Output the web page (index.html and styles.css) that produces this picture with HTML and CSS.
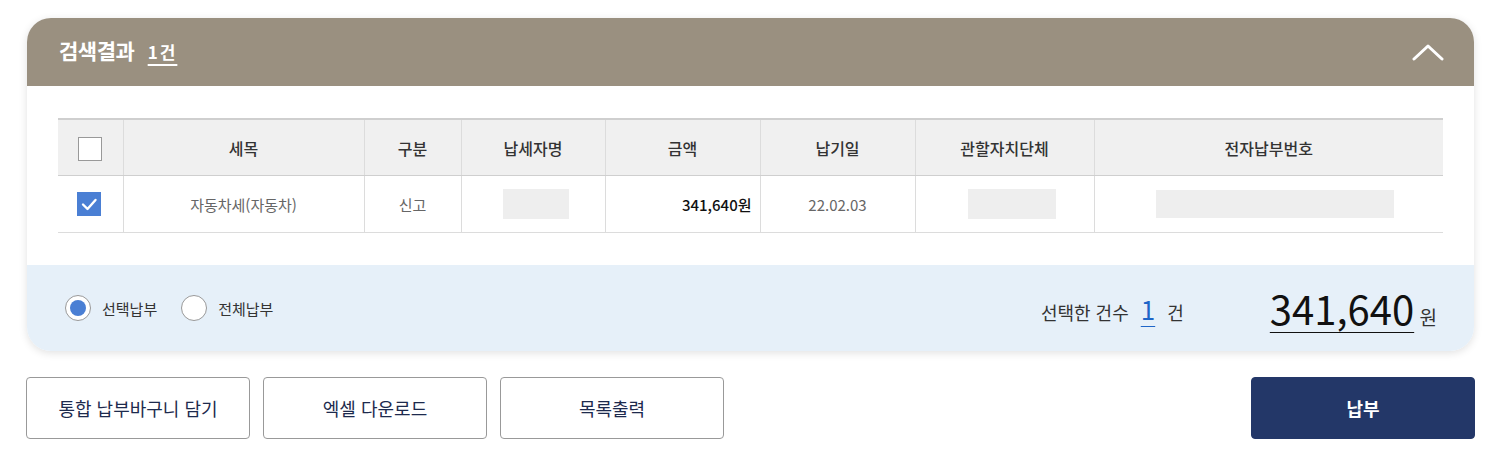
FILE: index.html
```html
<!DOCTYPE html>
<html lang="ko">

<head>
  <meta charset="UTF-8">
  <title>검색결과</title>
  <link rel="stylesheet" href="styles.css">
</head>

<body>

  <div class="page">
    <section class="result-card">
      <div class="result-head">
        <h2>검색결과 <span class="count">1건</span></h2>
        <button class="toggle" aria-label="접기">
          <svg width="32" height="18" viewBox="0 0 32 18">
            <polyline points="2,16 16,3 30,16" fill="none" stroke="#fff" stroke-width="3" stroke-linecap="round" stroke-linejoin="round" />
          </svg>
        </button>
      </div>

      <div class="result-body">
        <table class="tax-table">
          <colgroup>
            <col style="width:65px">
            <col style="width:241px">
            <col style="width:97px">
            <col style="width:144px">
            <col style="width:155px">
            <col style="width:155px">
            <col style="width:179px">
            <col>
          </colgroup>
          <thead>
            <tr>
              <th><span class="check"></span></th>
              <th>세목</th>
              <th>구분</th>
              <th>납세자명</th>
              <th>금액</th>
              <th>납기일</th>
              <th>관할자치단체</th>
              <th>전자납부번호</th>
            </tr>
          </thead>
          <tbody>
            <tr>
              <td>
                <span class="check checked">
                  <svg width="24" height="24" viewBox="0 0 24 24">
                    <polyline points="6,12.5 10.5,17 18.5,8" fill="none" stroke="#fff" stroke-width="2.4" stroke-linecap="round" stroke-linejoin="round" />
                  </svg>
                </span>
              </td>
              <td>자동차세(자동차)</td>
              <td>신고</td>
              <td><span class="mask mask-name"></span></td>
              <td class="amount">341,640원</td>
              <td>22.02.03</td>
              <td><span class="mask mask-org"></span></td>
              <td><span class="mask mask-num"></span></td>
            </tr>
          </tbody>
        </table>
      </div>

      <div class="result-foot">
        <div class="pay-type">
          <label class="radio"><span class="dot on"></span>선택납부</label>
          <label class="radio"><span class="dot"></span>전체납부</label>
        </div>
        <div class="summary">
          <span class="sel-count">선택한 건수 <em>1</em> 건</span>
          <span class="total"><strong>341,640</strong> 원</span>
        </div>
      </div>
    </section>

    <div class="actions">
      <button class="btn">통합 납부바구니 담기</button>
      <button class="btn">엑셀 다운로드</button>
      <button class="btn">목록출력</button>
      <button class="btn btn-pay">납부</button>
    </div>
  </div>

</body>

</html>
```

FILE: styles.css
```css
body {
  margin: 0;
  background: #fff;
  font-family: "Noto Sans CJK KR", "Noto Sans", sans-serif;
  color: #333;
}

.page {
  width: 1449px;
  padding: 18px 0 0 26px;
}

.result-card {
  margin-left: 1px;
  width: 1447px;
  border-radius: 24px;
  overflow: hidden;
  background: #fff;
  box-shadow: 0 2px 8px rgba(0, 0, 0, 0.12);
}

.result-head {
  height: 68px;
  background: #9a9080;
  display: flex;
  align-items: center;
  justify-content: space-between;
  padding: 0 30px 0 32px;
}

.result-head h2 {
  margin: 0 0 4px;
  color: #fff;
  font-size: 21px;
  font-weight: 700;
  letter-spacing: -0.5px;
}

.count {
  margin-left: 8px;
  font-size: 17px;
  letter-spacing: 2px;
  text-decoration: underline;
  text-underline-offset: 5px;
  text-decoration-thickness: 2px;
}

.toggle {
  background: none;
  border: none;
  padding: 0;
  display: flex;
  cursor: pointer;
}

.result-body {
  padding: 32px 31px 32px 31px;
}

.tax-table {
  width: 100%;
  border-collapse: collapse;
  table-layout: fixed;
  border-top: 2px solid #cfcfcf;
}

.tax-table th {
  height: 55px;
  background: #f0f0f0;
  font-size: 16px;
  font-weight: 500;
  color: #333;
  border-bottom: 1px solid #cfcfcf;
  border-left: 1px solid #dcdcdc;
  padding: 0;
}

.tax-table td {
  height: 56px;
  text-align: center;
  font-size: 15px;
  color: #666;
  border-bottom: 1px solid #dcdcdc;
  border-left: 1px solid #dcdcdc;
  padding: 0;
}

.tax-table th:first-child,
.tax-table td:first-child {
  border-left: none;
}

.tax-table td.amount {
  text-align: right;
  padding-right: 8px;
  color: #111;
  font-weight: 500;
  font-size: 15px;
}

.check {
  display: inline-block;
  width: 22px;
  height: 22px;
  border: 1px solid #999;
  background: #fff;
  vertical-align: middle;
}

.check.checked {
  width: 24px;
  height: 24px;
  border: none;
  background: #4a7fd4;
  margin-left: -2px;
}

.check svg {
  display: block;
}

.mask {
  display: inline-block;
  height: 30px;
  background: #eee;
  vertical-align: middle;
}

.mask-name {
  width: 66px;
  margin-left: 6px;
}

.mask-org {
  width: 88px;
  margin-left: 14px;
}

.mask-num {
  width: 238px;
  height: 28px;
  margin-left: 12px;
}

.result-foot {
  height: 86px;
  background: #e6f0f9;
  display: flex;
  align-items: center;
  justify-content: space-between;
  padding: 0 37px 0 38px;
}

.pay-type {
  display: flex;
  gap: 24px;
}

.radio {
  display: flex;
  align-items: center;
  gap: 11px;
  font-size: 15px;
  color: #333;
}

.dot {
  width: 24px;
  height: 24px;
  border: 1px solid #999;
  border-radius: 50%;
  background: #fff;
  position: relative;
}

.dot.on::after {
  content: "";
  position: absolute;
  left: 4px;
  top: 4px;
  width: 16px;
  height: 16px;
  border-radius: 50%;
  background: #4a7fd4;
}

.summary {
  display: flex;
  align-items: center;
}

.sel-count {
  font-size: 18px;
  color: #333;
}

.sel-count em {
  font-style: normal;
  font-size: 26px;
  color: #1f66c8;
  margin: 0 7px;
  text-decoration: underline;
  text-underline-offset: 6px;
  text-decoration-thickness: 1px;
}

.total {
  margin-left: 86px;
  font-size: 19px;
  color: #333;
}

.total strong {
  font-size: 40px;
  font-weight: 400;
  color: #111;
  text-decoration: underline;
  text-underline-offset: 7px;
  text-decoration-thickness: 1px;
}

.actions {
  display: flex;
  gap: 13px;
  margin-top: 26px;
}

.btn {
  width: 224px;
  height: 62px;
  background: #fff;
  border: 1px solid #999;
  border-radius: 4px;
  font-family: inherit;
  font-size: 18px;
  color: #1d2a4d;
  cursor: pointer;
}

.btn-pay {
  margin-left: auto;
  background: #233768;
  border-color: #233768;
  color: #fff;
  font-weight: 700;
}
```
